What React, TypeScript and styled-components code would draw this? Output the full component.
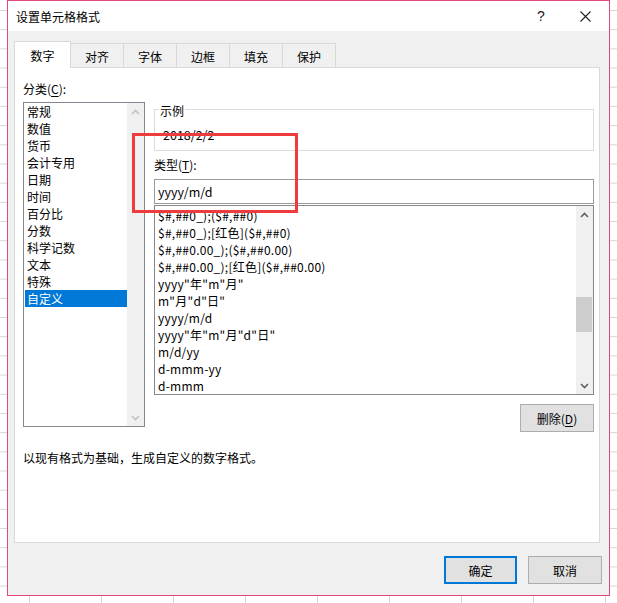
import React from 'react';
import styled, { createGlobalStyle } from 'styled-components';

const GlobalStyle = createGlobalStyle`
  html, body {
    margin: 0;
    padding: 0;
  }
  body {
    width: 617px;
    height: 603px;
    overflow: hidden;
    background-color: #ffffff;
    background-image:
      linear-gradient(#d6d6d6 1px, transparent 1px),
      linear-gradient(90deg, #d6d6d6 1px, transparent 1px);
    background-size: 72px 19.2px;
    background-position: 29px 10px;
    font-family: "Noto Sans CJK SC", "Noto Sans", sans-serif;
    font-size: 12px;
    color: #000;
  }
`;

const Dialog = styled.div`
  position: relative;
  margin-left: 7px;
  width: 601px;
  height: 594px;
  border: 1px solid #e2487c;
  background: #f0f0f0;
  display: flex;
  flex-direction: column;
`;

const TitleBar = styled.div`
  height: 30px;
  background: #ffffff;
  display: flex;
  align-items: center;
  padding-left: 8px;
`;

const Title = styled.div`
  flex: 1;
  font-size: 12px;
  line-height: 17px;
`;

const TitleButton = styled.div<{ $width: number }>`
  width: ${(p) => p.$width}px;
  height: 30px;
  display: flex;
  align-items: center;
  justify-content: center;
  font-family: "Liberation Sans", sans-serif;
  font-size: 14px;
  color: #222;
`;

const Body = styled.div`
  flex: 1;
  padding: 10px 9px 0 6px;
  display: flex;
  flex-direction: column;
`;

const TabRow = styled.div`
  display: flex;
  align-items: flex-end;
  height: 27px;
  margin-bottom: -1px;
  position: relative;
  z-index: 1;
`;

const Tab = styled.div<{ $active?: boolean }>`
  box-sizing: border-box;
  width: ${(p) => (p.$active ? 57 : 54)}px;
  height: ${(p) => (p.$active ? 27 : 25)}px;
  margin-right: -1px;
  border: 1px solid #d9d9d9;
  border-bottom: ${(p) => (p.$active ? 'none' : '1px solid #d9d9d9')};
  background: ${(p) => (p.$active ? '#ffffff' : '#f0f0f0')};
  display: flex;
  align-items: center;
  justify-content: center;
  padding-top: ${(p) => (p.$active ? 0 : 1)}px;
  position: relative;
  z-index: ${(p) => (p.$active ? 2 : 1)};
`;

const Panel = styled.div`
  box-sizing: border-box;
  height: 476px;
  border: 1px solid #d9d9d9;
  background: #ffffff;
  padding: 12px 0 0 8px;
  display: flex;
  flex-direction: column;
`;

const Columns = styled.div`
  display: flex;
  gap: 9px;
`;

const LeftCol = styled.div`
  width: 122px;
  display: flex;
  flex-direction: column;
`;

const RightCol = styled.div`
  width: 440px;
  display: flex;
  flex-direction: column;
`;

const Label = styled.div<{ $gap?: number }>`
  line-height: 17px;
  margin-top: ${(p) => p.$gap || 0}px;
`;

const Key = styled.span`
  text-decoration: underline;
  text-underline-offset: 2px;
`;

const ListBox = styled.div<{ $height: number; $gap: number }>`
  box-sizing: border-box;
  height: ${(p) => p.$height}px;
  margin-top: ${(p) => p.$gap}px;
  border: 1px solid #828790;
  display: flex;
  background: #fff;
`;

const Items = styled.div<{ $pad: number; $spacing?: number }>`
  flex: 1;
  overflow: hidden;
  padding-top: ${(p) => p.$pad}px;
  letter-spacing: ${(p) => p.$spacing || 0}px;
`;

const Item = styled.div<{ $selected?: boolean }>`
  height: 17px;
  line-height: 17px;
  margin-left: 1px;
  padding-left: 2px;
  white-space: nowrap;
  background: ${(p) => (p.$selected ? '#0078d7' : 'transparent')};
  color: ${(p) => (p.$selected ? '#ffffff' : '#000000')};
`;

const ScrollBar = styled.div`
  width: 17px;
  background: #f0f0f0;
  display: flex;
  flex-direction: column;
  align-items: center;
`;

const Arrow = styled.div`
  width: 17px;
  height: 17px;
  display: flex;
  align-items: center;
  justify-content: center;
`;

const Track = styled.div`
  flex: 1;
  width: 100%;
  position: relative;
`;

const Thumb = styled.div`
  position: absolute;
  left: 0;
  right: 1px;
  background: #cdcdcd;
`;

const Group = styled.div`
  box-sizing: border-box;
  position: relative;
  height: 42px;
  margin-top: 29px;
  border: 1px solid #dcdcdc;
  padding: 16px 0 0 8px;
  line-height: 17px;
  font-size: 12.5px;
`;

const Legend = styled.span`
  position: absolute;
  top: -8px;
  left: 4px;
  padding: 0 1px;
  background: #ffffff;
  line-height: 17px;
  font-size: 12px;
`;

const TypeInput = styled.div`
  box-sizing: border-box;
  height: 25px;
  margin-top: 6px;
  border: 1px solid #9a9a9a;
  padding-left: 3px;
  display: flex;
  align-items: center;
  font-size: 12.5px;
`;

const ButtonRow = styled.div`
  display: flex;
  justify-content: flex-end;
  margin-top: 9px;
`;

const Button = styled.div<{ $primary?: boolean }>`
  box-sizing: border-box;
  width: ${(p) => (p.$primary ? 73 : 74)}px;
  height: 28px;
  background: #e1e1e1;
  border: ${(p) => (p.$primary ? '2px solid #0078d7' : '1px solid #adadad')};
  display: flex;
  align-items: center;
  justify-content: center;
`;

const Description = styled.div`
  margin-top: 17px;
  line-height: 17px;
`;

const Footer = styled.div`
  display: flex;
  justify-content: flex-end;
  gap: 11px;
  padding-top: 13px;
  margin-right: -2px;
`;

const Highlight = styled.div`
  position: absolute;
  left: 124px;
  top: 132px;
  width: 166px;
  height: 80px;
  box-sizing: border-box;
  border: 3px solid #ef3b3b;
  pointer-events: none;
`;

const Chevron = ({ up, color }: { up?: boolean; color: string }) => (
  <svg width="9" height="6" viewBox="0 0 9 6">
    <path
      d={up ? 'M1 5 L4.5 1.5 L8 5' : 'M1 1 L4.5 4.5 L8 1'}
      fill="none"
      stroke={color}
      strokeWidth="1.6"
    />
  </svg>
);

const categories = ['常规', '数值', '货币', '会计专用', '日期', '时间', '百分比', '分数', '科学记数', '文本', '特殊', '自定义'];

const formats = [
  '$#,##0_);($#,##0)',
  '$#,##0_);[红色]($#,##0)',
  '$#,##0.00_);($#,##0.00)',
  '$#,##0.00_);[红色]($#,##0.00)',
  'yyyy"年"m"月"',
  'm"月"d"日"',
  'yyyy/m/d',
  'yyyy"年"m"月"d"日"',
  'm/d/yy',
  'd-mmm-yy',
  'd-mmm',
];

const tabs = ['数字', '对齐', '字体', '边框', '填充', '保护'];

export default function App() {
  return (
    <>
      <GlobalStyle />
      <Dialog>
        <TitleBar>
          <Title>设置单元格格式</Title>
          <TitleButton $width={40}>?</TitleButton>
          <TitleButton $width={48}>
            <svg width="11" height="11" viewBox="0 0 11 11">
              <path d="M0.5 0.5 L10.5 10.5 M10.5 0.5 L0.5 10.5" stroke="#222" strokeWidth="1.1" />
            </svg>
          </TitleButton>
        </TitleBar>
        <Body>
          <TabRow>
            {tabs.map((t, i) => (
              <Tab key={t} $active={i === 0}>
                {t}
              </Tab>
            ))}
          </TabRow>
          <Panel>
            <Columns>
              <LeftCol>
                <Label>
                  分类(<Key>C</Key>):
                </Label>
                <ListBox $height={325} $gap={5}>
                  <Items $pad={0}>
                    {categories.map((c) => (
                      <Item key={c} $selected={c === '自定义'}>
                        {c}
                      </Item>
                    ))}
                  </Items>
                  <ScrollBar>
                    <Arrow>
                      <Chevron up color="#c2c2c2" />
                    </Arrow>
                    <Track />
                    <Arrow>
                      <Chevron color="#c2c2c2" />
                    </Arrow>
                  </ScrollBar>
                </ListBox>
              </LeftCol>
              <RightCol>
                <Group>
                  <Legend>示例</Legend>
                  2018/2/2
                </Group>
                <Label $gap={5}>
                  类型(<Key>T</Key>):
                </Label>
                <TypeInput>yyyy/m/d</TypeInput>
                <ListBox $height={190} $gap={1}>
                  <Items $pad={1} $spacing={0.25}>
                    {formats.map((f) => (
                      <Item key={f}>{f}</Item>
                    ))}
                  </Items>
                  <ScrollBar>
                    <Arrow>
                      <Chevron up color="#606060" />
                    </Arrow>
                    <Track>
                      <Thumb style={{ top: 74, height: 35 }} />
                    </Track>
                    <Arrow>
                      <Chevron color="#606060" />
                    </Arrow>
                  </ScrollBar>
                </ListBox>
                <ButtonRow>
                  <Button>
                    删除(<Key>D</Key>)
                  </Button>
                </ButtonRow>
              </RightCol>
            </Columns>
            <Description>以现有格式为基础，生成自定义的数字格式。</Description>
          </Panel>
          <Footer>
            <Button $primary>确定</Button>
            <Button>取消</Button>
          </Footer>
        </Body>
        <Highlight />
      </Dialog>
    </>
  );
}
